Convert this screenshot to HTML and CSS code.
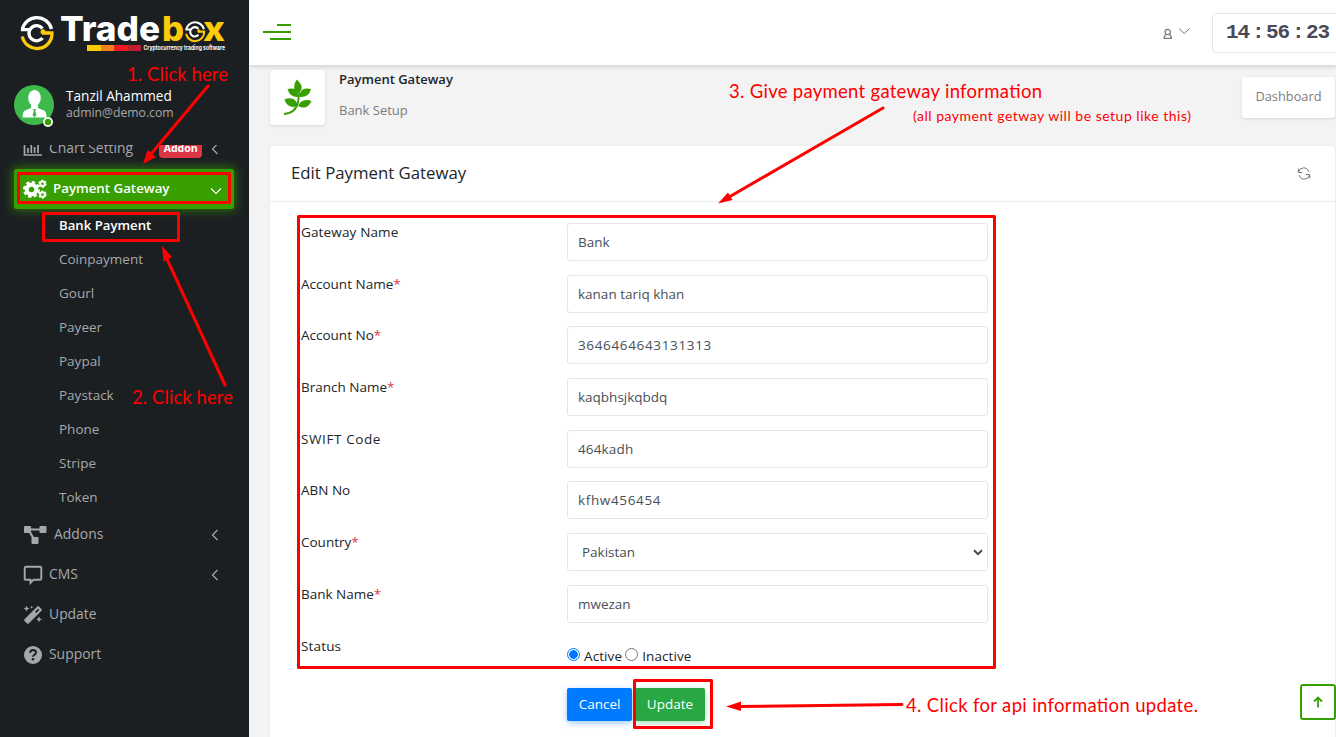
FILE: index.html
```html
<!DOCTYPE html>
<html lang="en">
<head>
<meta charset="utf-8">
<title>Payment Gateway</title>
<link rel="stylesheet" href="styles.css">
</head>
<body>
<div class="app">
  <aside class="sidebar">
    <div class="brand">
      <svg width="249" height="66" viewBox="0 0 249 66">
        <g id="ring" fill="none">
          <path d="M21 29.700H29.500M22.200 30A15 15 0 0 1 51.500 29" stroke="#fff" stroke-width="3.300"/>
          <path d="M22.300 36.500A15 15 0 0 0 52 33H42" stroke="#fdcb0a" stroke-width="3.300"/>
          <path d="M42.500 28.500a7.600 7.600 0 1 0 0 9.500" stroke="#fff" stroke-width="3.400"/>
          <circle cx="43" cy="31.800" r="2.500" fill="#fdcb0a"/>
        </g>
        <text class="logo" x="60" y="41" textLength="100" lengthAdjust="spacingAndGlyphs" fill="#fff">Trade</text>
        <text class="logo" x="162" y="41" textLength="22" lengthAdjust="spacingAndGlyphs" fill="#fdcb0a">b</text>
        <use href="#ring" transform="translate(172.500 11.500) scale(.61)"/>
        <text class="logo" x="203" y="41" textLength="22" lengthAdjust="spacingAndGlyphs" fill="#fdcb0a">x</text>
        <path fill="#fdcb0a" d="M87 45h14v6H87z"/><path fill="#f58220" d="M101 45h13v6h-13z"/><path fill="#ed1c24" d="M114 45h14v6h-14z"/><path fill="#be1e2d" d="M128 45h13v6h-13z"/>
        <text class="slogan" x="143.500" y="50" textLength="81.500" lengthAdjust="spacingAndGlyphs">Cryptocurrency trading software</text>
      </svg>
    </div>
    <div class="profile">
      <svg width="42" height="44" viewBox="0 0 42 44">
        <circle cx="20" cy="20" r="20" fill="#3dba4b"/>
        <ellipse cx="20.500" cy="13" rx="6.300" ry="8" fill="#fff"/>
        <path fill="#fff" d="M17 18h7v5l6 2.500q2.500 1 2.500 7H8.500q0-6 2.500-7l6-2.500z"/>
        <path fill="#3dba4b" d="M19 24h3l-.8 2 1.300 4-2 2.500-2-2.500 1.300-4z"/>
        <circle cx="34" cy="37" r="5" fill="#fff"/><circle cx="34" cy="37" r="3.200" fill="#37a000"/>
      </svg>
      <div class="who"><div class="name">Tanzil Ahammed</div><div class="mail">admin@demo.com</div></div>
    </div>
    <nav class="menu">
      <div class="item item-cut">
        <svg class="icon" width="20" height="20" viewBox="0 0 20 20" fill="none" stroke="#a5a8ab" stroke-width="1.700"><path d="M1.500 1v15H19M5 14V9M8.300 14V5M11.600 14V8M15 14V4"/></svg>
        <span class="label">Chart Setting</span><span class="badge">Addon</span>
        <svg class="chev" width="8" height="12" viewBox="0 0 8 12"><path d="M6.500 1 1.500 6l5 5"/></svg>
      </div>
      <div class="item active">
        <svg class="icon" width="25" height="20" viewBox="0 0 25 20" fill="none" stroke="#fff">
          <circle cx="8.500" cy="10.500" r="4.800" stroke-width="4"/><circle cx="8.500" cy="10.500" r="7.200" stroke-width="2.600" stroke-dasharray="3.400 2.255"/>
          <circle cx="19.500" cy="4.800" r="2.300" stroke-width="2"/><circle cx="19.500" cy="4.800" r="3.500" stroke-width="1.300" stroke-dasharray="2.200 1.465"/>
          <circle cx="19.500" cy="15.600" r="2.300" stroke-width="2"/><circle cx="19.500" cy="15.600" r="3.500" stroke-width="1.300" stroke-dasharray="2.200 1.465"/>
        </svg>
        <span class="label">Payment Gateway</span>
        <svg class="chev" width="12" height="8" viewBox="0 0 12 8"><path d="m1 1.500 5 5 5-5"/></svg>
      </div>
      <ul class="sub">
        <li class="current">Bank Payment</li><li>Coinpayment</li><li>Gourl</li><li>Payeer</li><li>Paypal</li><li>Paystack</li><li>Phone</li><li>Stripe</li><li>Token</li>
      </ul>
      <div class="item">
        <svg class="icon" width="25" height="20" viewBox="0 0 25 20"><g fill="#a5a8ab"><rect x="1" y="1" width="7" height="7" rx="1"/><rect x="16.500" y="1" width="7" height="7" rx="1"/><rect x="8.500" y="12" width="7" height="7" rx="1"/><path d="M7 3.500h10v2H7zM5.500 7l2-1 4 7-1.800 1z"/></g></svg>
        <span class="label">Addons</span>
        <svg class="chev" width="8" height="12" viewBox="0 0 8 12"><path d="M6.500 1 1.500 6l5 5"/></svg>
      </div>
      <div class="item">
        <svg class="icon" width="20" height="20" viewBox="0 0 20 20"><path fill="none" stroke="#a5a8ab" stroke-width="1.900" d="M3 1.800h14q1.300 0 1.300 1.300v10.400q0 1.300-1.300 1.300h-6.500l-3 3v-3H3q-1.300 0-1.300-1.300V3.100Q1.700 1.800 3 1.800z"/></svg>
        <span class="label">CMS</span>
        <svg class="chev" width="8" height="12" viewBox="0 0 8 12"><path d="M6.500 1 1.500 6l5 5"/></svg>
      </div>
      <div class="item">
        <svg class="icon" width="20" height="20" viewBox="0 0 20 20" fill="#a5a8ab"><path fill-rule="evenodd" d="M14.300 1.500q.8-.8 1.600 0l2.600 2.600q.8.800 0 1.600L5.700 18.500q-.8.700-1.600 0L1.500 15.900q-.8-.8 0-1.600zM15 3.800l-3 3 1.300 1.300 3-3z"/><path d="m3.500.8.900 2 2.100.8-2.100.8-.9 2-.9-2-2-.8 2-.8zM16 11.300l.9 2.100 2.300.9-2.300.9-.9 2.100-.9-2.100-2.100-.9 2.100-.9zM8.700.8l.5 1 1 .5-1 .5-.5 1-.5-1-1-.5 1-.5z"/></svg>
        <span class="label">Update</span>
      </div>
      <div class="item">
        <svg class="icon" width="20" height="20" viewBox="0 0 20 20"><circle cx="10" cy="10" r="9" fill="#a5a8ab"/><path d="M7 7.700q.6-2.700 3.200-2.700 2.800.2 2.800 2.600 0 1.500-1.600 2.300-1.400.7-1.400 1.900" fill="none" stroke="#1c1f22" stroke-width="2"/><circle cx="10" cy="14.300" r="1.300" fill="#1c1f22"/></svg>
        <span class="label">Support</span>
      </div>
    </nav>
  </aside>

  <main class="main">
    <header class="topbar">
      <svg width="28" height="17" viewBox="0 0 28 17" fill="#37a000"><rect x="14" width="14" height="2" y="0"/><rect y="7" width="28" height="2"/><rect x="7" y="14" width="21" height="2"/></svg>
      <div class="top-right">
        <svg class="user" width="28" height="16" viewBox="0 0 28 16" fill="none" stroke="#777"><g stroke-width="1.200"><circle cx="4.700" cy="7" r="2.700"/><path d="M3.300 9.500q-2.200.8-2.200 3.900h7.300q0-3.100-2.200-3.900"/></g><path d="m16 3.500 5.300 5 5.300-5"/></svg>
        <div class="clock"><span>14</span><i>:</i><span>56</span><i>:</i><span>23</span></div>
      </div>
    </header>
    <section class="heading">
      <div class="tile">
        <svg width="55" height="55" viewBox="0 0 55 55"><g fill="#37a000"><path d="M26.500 9.500q5.500 4.500 5.200 8.500-.7 4-3.700 5-3.500-1.500-3.800-5.500 0-4 2.300-8zM17.500 19q5.500-1.200 8.500 1 2.500 2.500 2 7-8 .5-10.500-8zM41 19q-5.500-1.200-9 1-2.500 2.500-2 7 9 .5 11-8zM14.500 29.500q4-1.800 8-.8 4.500 1.500 5 6.800-3.500 2.300-7.500.8-4-1.500-5.500-6.800zM41.500 31q-4-2-8.500-.3-4.200 1.500-4.700 5.500 9 4.300 13.200-5.200z"/></g><path d="M14 44q12-1 14-12l1.500-10" fill="none" stroke="#37a000" stroke-width="1.900"/></svg>
      </div>
      <div class="titles"><h1>Payment Gateway</h1><small>Bank Setup</small></div>
      <a class="crumb">Dashboard</a>
    </section>
    <section class="card">
      <div class="card-head"><h2>Edit Payment Gateway</h2>
        <svg width="14" height="13" viewBox="0 0 14 13" fill="none" stroke="#777"><path d="M1.300 1.500v4h4M1.500 5A5.300 5.300 0 0 1 11.800 4.800M12.700 11.500v-4h-4M12.500 8A5.300 5.300 0 0 1 2.200 8.200"/></svg>
      </div>
      <form class="form">
        <div class="row"><label class="wide">Gateway Name</label><div class="field">Bank</div></div>
        <div class="row"><label>Account Name<b>*</b></label><div class="field">kanan tariq khan</div></div>
        <div class="row"><label>Account No<b>*</b></label><div class="field number">3646464643131313</div></div>
        <div class="row"><label>Branch Name<b>*</b></label><div class="field">kaqbhsjkqbdq</div></div>
        <div class="row"><label class="swift">SWIFT Code</label><div class="field wide">464kadh</div></div>
        <div class="row"><label>ABN No</label><div class="field number">kfhw456454</div></div>
        <div class="row"><label>Country<b>*</b></label><div class="field select">Pakistan<svg width="10" height="7" viewBox="0 0 10 7"><path d="m1 1.200 4 4 4-4" fill="none" stroke="#444a50" stroke-width="2"/></svg></div></div>
        <div class="row"><label>Bank Name<b>*</b></label><div class="field">mwezan</div></div>
        <div class="row"><label class="wide">Status</label><div class="radios"><span class="radio on"></span><span class="opt">Active</span><span class="radio"></span><span class="opt">Inactive</span></div></div>
        <div class="actions"><button type="button" class="btn cancel">Cancel</button><button type="button" class="btn update">Update</button></div>
      </form>
    </section>
  </main>
</div>

<div class="to-top"><svg width="10" height="12" viewBox="0 0 10 12" fill="none" stroke="#37a000" stroke-width="1.800"><path d="M5 11.500V2M1 5.500l4-4 4 4"/></svg></div>

<svg class="notes" width="1336" height="737" viewBox="0 0 1336 737">
  <g fill="none" stroke="#f00" stroke-width="3" stroke-linejoin="round">
    <rect x="18.500" y="173.500" width="211" height="29"/>
    <rect x="43.500" y="213.500" width="135" height="27"/>
    <rect x="298.500" y="216.500" width="696" height="451"/>
    <rect x="634.500" y="680.500" width="77" height="47"/>
  </g>
  <g stroke="#f00" stroke-width="3" stroke-linecap="round"><path d="M208 86 151 154M225 385 167 259M883 108 730 196.500M902 704.500 738 706.500"/></g>
  <g fill="#f00"><path d="m143 164 4.500-14 8.500 7z"/><path d="m162 246 10 11-8.500 4.500z"/><path d="m718 203.500 10-11 4.500 7.500z"/><path d="m726 706.500 15-5v9.500z"/></g>
  <g class="note">
    <text x="127" y="81" textLength="101">1. Click here</text>
    <text x="132" y="404" textLength="101">2. Click here</text>
    <text x="729" y="98" textLength="313">3. Give payment gateway information</text>
    <text x="906" y="712" textLength="292">4. Click for api information update.</text>
    <text class="small" x="913" y="121" textLength="278">(all payment getway will be setup like this)</text>
  </g>
</svg>
</body>
</html>
```
FILE: styles.css
```css
* { box-sizing: border-box; }
body { margin: 0; width: 1336px; height: 737px; overflow: hidden; font-family: "Open Sans", sans-serif; font-size: 13.5px; color: #212529; background: #f3f3f3; }
.app { display: flex; height: 737px; }

.sidebar { width: 249px; flex: none; background: #1c1f22; color: #a5a8ab; display: flex; flex-direction: column; overflow: hidden; }
.brand { height: 66px; }
.brand svg { display: block; }
.logo { font: 800 34px Inter, sans-serif; }
.slogan { font: 700 6px Inter, sans-serif; fill: #fff; }
.profile { height: 79px; flex: none; padding: 19px 0 0 14px; display: flex; gap: 10px; }
.who { padding-top: 2px; }
.name { color: #fff; font-size: 13.6px; font-weight: 500; line-height: 18px; }
.mail { font-size: 12.2px; line-height: 15px; color: #a5a8ab; }
.menu { flex: 1; overflow: hidden; padding: 0 15px 0 14px; font-weight: 500; }
.item { height: 40px; display: flex; align-items: center; padding: 0 15px 0 9px; }
.item-cut { margin-top: -16px; }
.icon { flex: none; }
.label { margin: -2px 0 0 6px; font-size: 13.9px; line-height: 20px; }
.chev { margin-left: auto; fill: none; stroke: #a5a8ab; stroke-width: 1.2; }
.badge { margin-left: 26px; width: 43px; height: 18px; border-radius: 4px; background: #dc3545; color: #fff; font-size: 10.5px; font-weight: 700; line-height: 17px; text-align: center; }
.active { background: #37a000; border-radius: 3px; color: #fff; box-shadow: 0 0 10px 2px rgba(55, 160, 0, .6); font-weight: 600; padding-right: 12px; }
.active .label { margin-left: 5px; font-size: 13.3px; }
.active .chev { stroke: #fff; margin-top: 4px; }
.sub { list-style: none; margin: 0; padding: 0 0 0 45px; height: 306px; }
.sub li { height: 34px; line-height: 33px; }
.sub .current { color: #fff; font-size: 13.2px; font-weight: 600; }

.main { flex: 1; min-width: 0; display: flex; flex-direction: column; }
.topbar { height: 65px; flex: none; background: #fff; box-shadow: 0 1px 5px rgba(0, 0, 0, .18); display: flex; justify-content: space-between; align-items: center; padding-left: 14px; }
.top-right { display: flex; align-items: center; }
.user { margin-right: 21px; }
.clock { width: 130px; height: 40px; border: 1px solid #e4e5e7; border-radius: 4px; margin-right: -6px; padding-left: 13px; display: flex; align-items: center; gap: 6px; font: 700 21px/1 "Liberation Mono", monospace; color: #4a4a57; }
.clock span { width: 24px; letter-spacing: -1px; }
.clock i { width: 4px; font-style: normal; text-indent: -4px; }
.heading { height: 81px; flex: none; padding: 5px 1px 0 21px; display: flex; align-items: flex-start; }
.tile { width: 55px; height: 55px; background: #fff; border-radius: 3px; box-shadow: 0 1px 3px rgba(0, 0, 0, .12); }
.titles { margin-left: 14px; }
.titles h1 { margin: 0; font-size: 13px; line-height: 19px; font-weight: 600; }
.titles small { display: block; margin-top: 12px; font-size: 13px; line-height: 19px; color: #7c7c7c; }
.crumb { margin: 7px 0 0 auto; width: 93px; height: 41px; border-radius: 3px; background: #fff; box-shadow: 0 1px 3px rgba(0, 0, 0, .12); text-align: center; line-height: 39px; font-size: 12.8px; color: #7c7c7c; }
.card { flex: 1; margin: 0 1px 0 21px; background: #fff; border-radius: 3px 3px 0 0; box-shadow: 0 0 2px rgba(0, 0, 0, .1); }
.card-head { height: 56px; border-bottom: 1px solid #ededed; padding: 0 24px 0 21px; display: flex; align-items: center; justify-content: space-between; }
.card-head h2 { margin: -2px 0 0; font-size: 16.8px; font-weight: 400; }
.form { padding: 21px 0 0 31px; }
.row { height: 51.7px; display: flex; }
.row label { width: 266px; line-height: 20px; margin-top: -1px; flex: none; }
.row label b { color: #dc3545; font-weight: 400; }
.wide { letter-spacing: .15px; }
.swift { letter-spacing: .6px; }
.field { width: 421px; height: 38px; border: 1px solid #e4e5e7; border-radius: 3px; padding: 0 10px; line-height: 36px; color: #495057; }
.number { letter-spacing: .65px; }
.select { display: flex; align-items: center; justify-content: space-between; padding: 0 4px 0 14px; }
.radios { display: flex; align-items: center; height: 20px; margin-top: 8px; }
.radio { width: 13px; height: 13px; border: 1px solid #767676; border-radius: 50%; }
.radio.on { border-color: #0075ff; background: radial-gradient(circle, #0075ff 4px, #fff 4.6px); }
.opt { margin: 2px 3px 0 4px; letter-spacing: .1px; }
.actions { padding-left: 266px; display: flex; gap: 3px; }
.btn { height: 33px; border: 0; border-radius: 2px; padding: 0 0 1px; color: #fff; font: 500 13.5px "Open Sans", sans-serif; }
.cancel { width: 65px; background: #007bff; box-shadow: 0 2px 6px rgba(0, 123, 255, .4); }
.update { width: 70px; background: #28a745; box-shadow: 0 2px 6px rgba(40, 167, 69, .4); }

.to-top { position: absolute; left: 1300px; top: 684px; width: 36px; height: 36px; border: 2px solid #37a000; border-radius: 3px; background: #fff; display: flex; align-items: center; justify-content: center; }
.notes { position: absolute; left: 0; top: 0; }
.note { font: 400 18.5px Lato, sans-serif; fill: #f00; }
.note .small { font-size: 14px; }
```
